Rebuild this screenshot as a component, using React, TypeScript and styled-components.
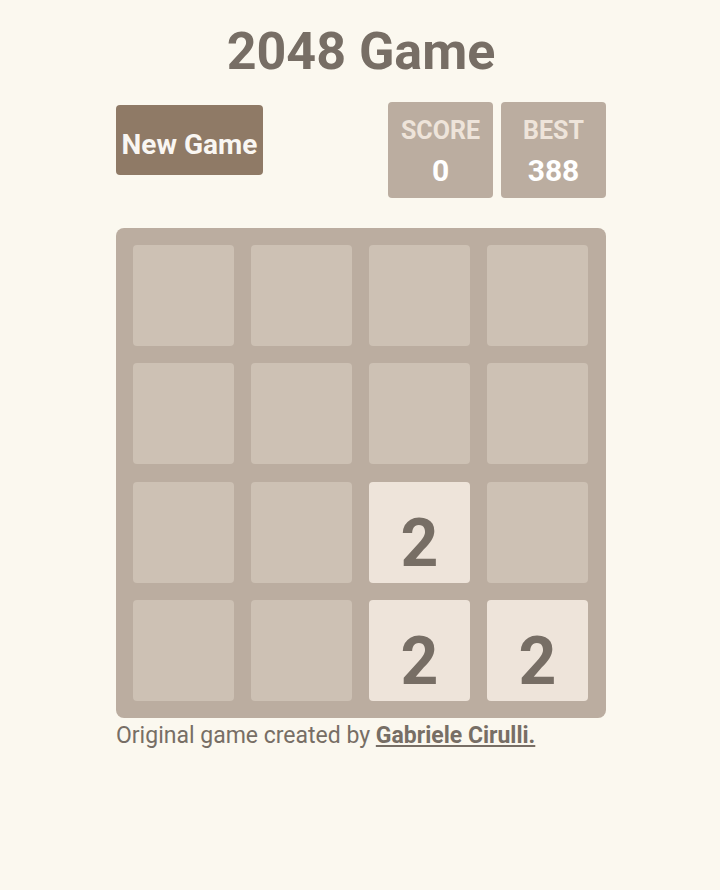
import styled, { createGlobalStyle } from 'styled-components';

const GlobalStyle = createGlobalStyle`
    body {
        margin: 0;
        padding-left: 2px;
        background: #fbf8ef;
        font-family: Roboto, "Liberation Sans", sans-serif;
        color: #776e65;
    }
`;

const board: number[][] = [
    [0, 0, 0, 0],
    [0, 0, 0, 0],
    [0, 0, 2, 0],
    [0, 0, 2, 2],
];

const App: React.FC = () => {
    return (
        <>
            <GlobalStyle />
            <Page>
                <Title>2048 Game</Title>
                <Header>
                    <NewGame>New Game</NewGame>
                    <Scores>
                        <ScoreBox>
                            <span className='Label'>SCORE</span>
                            <span className='Value'>0</span>
                        </ScoreBox>
                        <ScoreBox>
                            <span className='Label'>BEST</span>
                            <span className='Value'>388</span>
                        </ScoreBox>
                    </Scores>
                </Header>
                <Board>
                    {board.flat().map((v, i) => (
                        <Cell key={i} filled={v > 0}>{v > 0 ? v : ''}</Cell>
                    ))}
                </Board>
                <Footer>
                    Original game created by <a href='#'>Gabriele Cirulli.</a>
                </Footer>
            </Page>
        </>
    );
};

export default App;

const Page = styled.div`
    width: 490px;
    margin: 0 auto;
    padding-top: 22px;
    display: flex;
    flex-direction: column;
`;

const Title = styled.h1`
    margin: 0;
    text-align: center;
    font-size: 52px;
    font-weight: 700;
    line-height: 60px;
    color: #776e65;
`;

const Header = styled.div`
    display: flex;
    justify-content: space-between;
    align-items: flex-start;
    margin-top: 20px;
`;

const NewGame = styled.button`
    margin-top: 3px;
    width: 147px;
    height: 70px;
    padding: 8px 0 0;
    border: none;
    border-radius: 4px;
    background: #8f7a66;
    color: #f9f6f2;
    font-family: Roboto, "Liberation Sans", sans-serif;
    font-size: 28px;
    font-weight: 700;
    cursor: pointer;
`;

const Scores = styled.div`
    display: flex;
    gap: 8px;
`;

const ScoreBox = styled.div`
    width: 105px;
    height: 96px;
    border-radius: 4px;
    background: #bbada0;
    display: flex;
    flex-direction: column;
    align-items: center;
    justify-content: center;
    gap: 10px;
    padding-top: 6px;
    box-sizing: border-box;
    font-weight: 700;

    .Label {
        color: #eee4da;
        font-size: 25px;
        line-height: 26px;
    }
    .Value {
        color: #ffffff;
        font-size: 30px;
        line-height: 34px;
    }
`;

const Board = styled.div`
    margin-top: 30px;
    width: 490px;
    height: 490px;
    box-sizing: border-box;
    padding: 17px;
    border-radius: 8px;
    background: #bbada0;
    display: grid;
    grid-template-columns: repeat(4, 101px);
    grid-template-rows: repeat(4, 1fr);
    column-gap: 17px;
    row-gap: 17.5px;
`;

const Cell = styled.div<{ filled: boolean }>`
    border-radius: 4px;
    background: ${p => (p.filled ? '#eee4da' : '#cdc1b4')};
    color: #776e65;
    display: flex;
    align-items: center;
    justify-content: center;
    font-size: 66px;
    font-weight: 700;
    padding-top: 22px;
`;

const Footer = styled.p`
    margin: 4px 0 0;
    font-size: 23px;
    line-height: 28px;
    color: #776e65;

    a {
        color: #776e65;
        font-weight: 700;
        text-decoration: underline;
    }
`;
